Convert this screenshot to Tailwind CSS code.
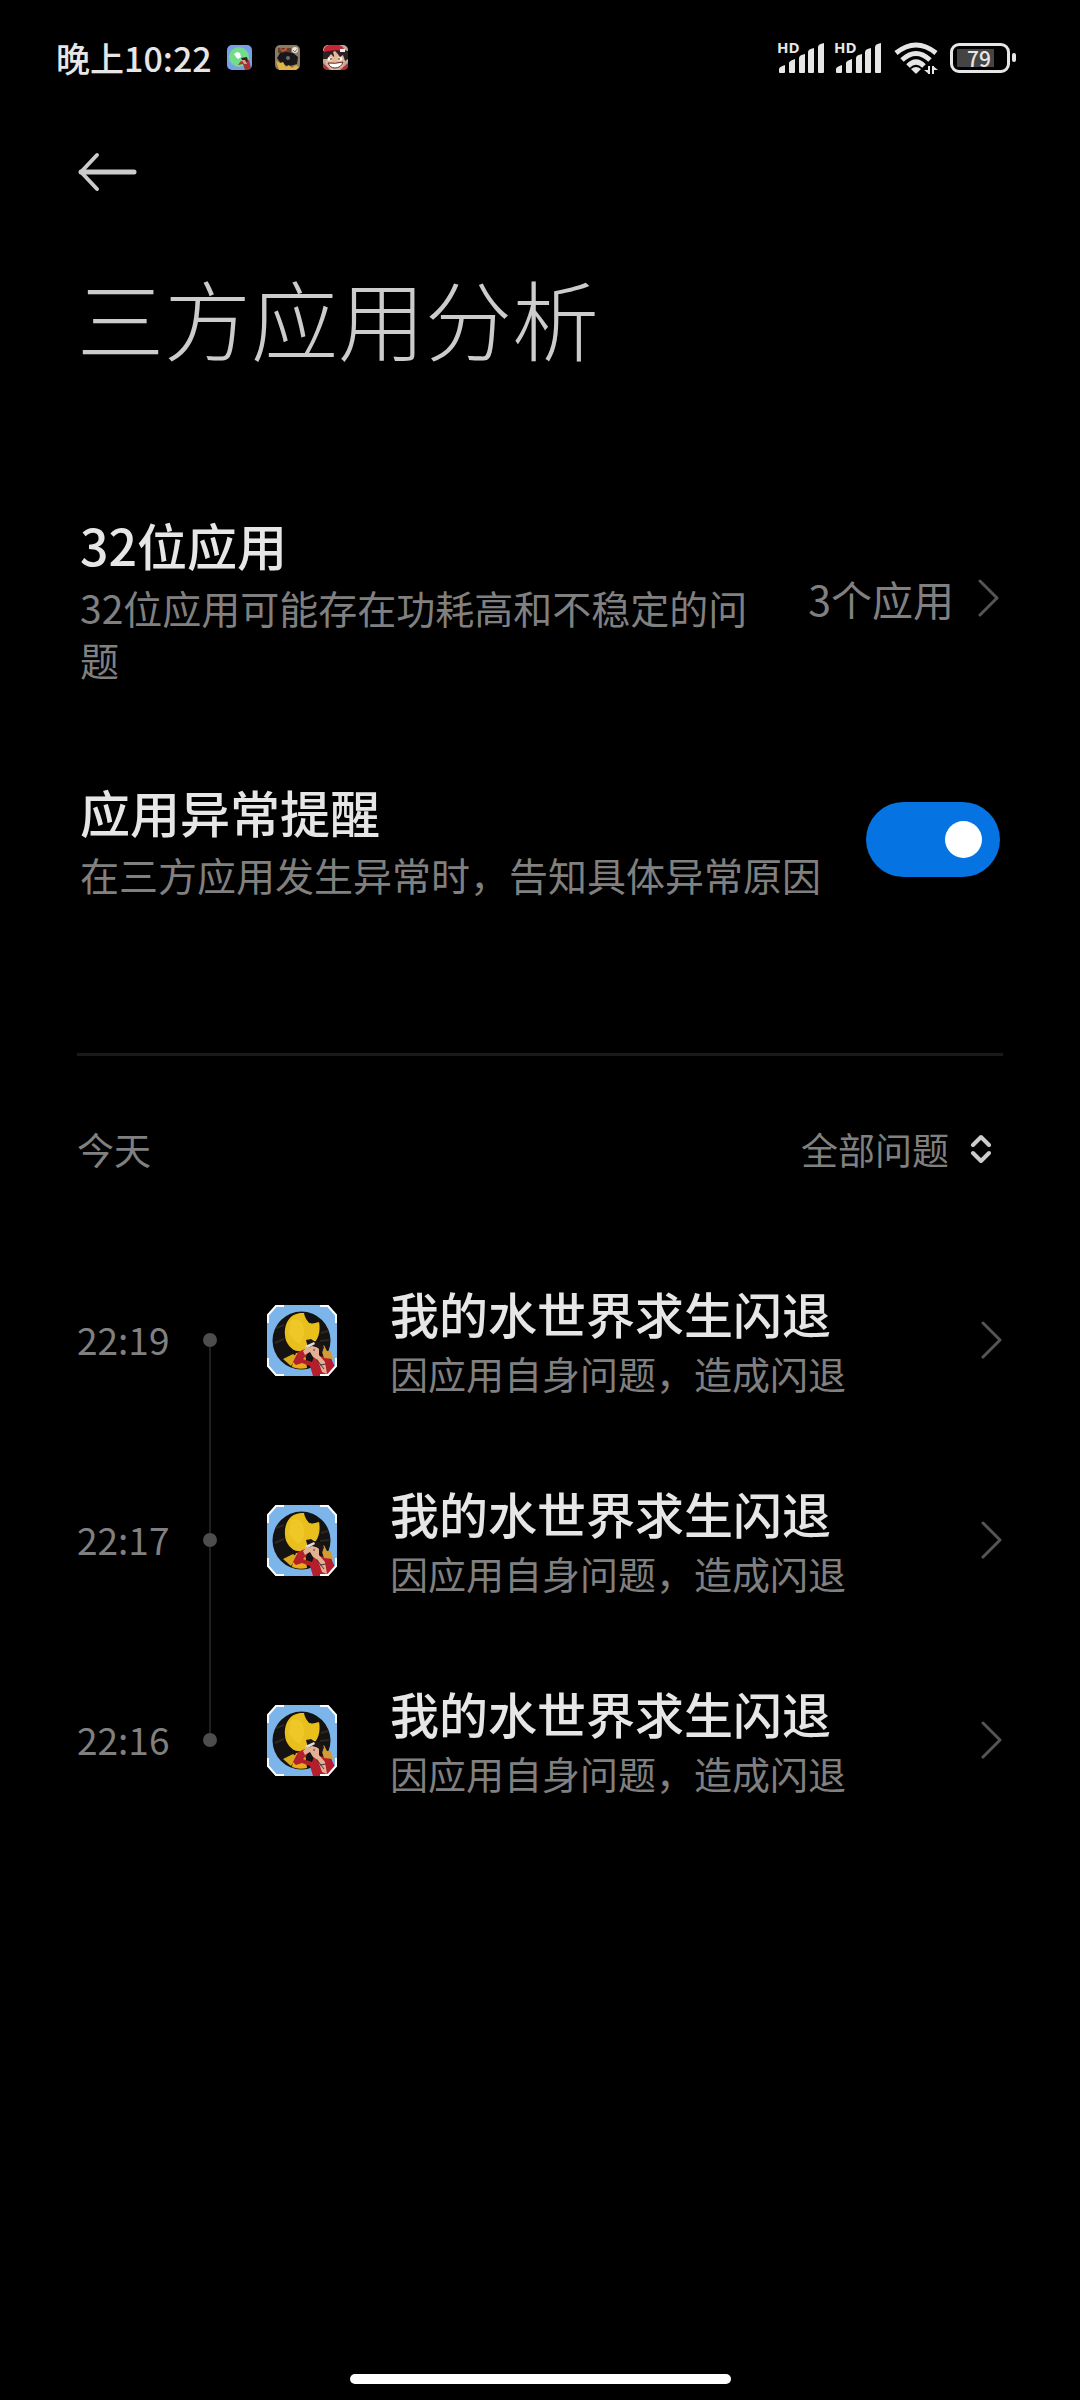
<!DOCTYPE html>
<html lang="zh-CN">
<head>
    <meta charset="UTF-8">
    <meta name="viewport" content="width=device-width, initial-scale=1.0">
    <title>三方应用分析</title>
    <script src="https://cdn.jsdelivr.net/npm/@tailwindcss/browser@4"></script>
</head>
<body class="bg-black text-[#e6e6e6] font-['Noto_Sans_CJK_SC',sans-serif] min-h-screen flex flex-col">
    <!-- Shared icons -->
    <svg class="hidden">
        <symbol id="chevron" viewBox="0 0 22 38">
            <path d="M2 2 L19 19 L2 36" fill="none" stroke="#555" stroke-width="3" stroke-linecap="round" stroke-linejoin="round"/>
        </symbol>
        <symbol id="signal" viewBox="0 0 46 30">
            <path d="M0 29 V26 Q0 24 6 22 V29 Q6 30 5 30 H1 Q0 30 0 29Z"/>
            <path d="M10 29 V20 Q10 18 16 16 V29 Q16 30 15 30 H11 Q10 30 10 29Z"/>
            <path d="M20 29 V15 Q20 12 26 11 V29 Q26 30 25 30 H21 Q20 30 20 29Z"/>
            <path d="M29 29 V9 Q29 6 35 5 V29 Q35 30 34 30 H30 Q29 30 29 29Z"/>
            <path d="M39 29 V4 Q39 1 45 0 V29 Q45 30 44 30 H40 Q39 30 39 29Z"/>
        </symbol>
        <symbol id="game" viewBox="0 0 70 71">
            <path d="M9 0 H61 L70 10 V61 L61 71 H9 L0 61 V10Z" fill="#7cb5ea"/>
            <circle cx="34.500" cy="35.500" r="29" fill="#151311"/>
            <path d="M9 23 L17 20 M8 38 L17 34 M54 28 L61 26 M53 36 L62 35" stroke="#2a2722" stroke-width="2"/>
            <path d="M18 30 C17 17 24 7 37 8 C38 14 42 20 48 18 L52 17 C54 26 51 36 45 40 L37 47 L31 46 C25 46 18 38 18 30Z" fill="#e8bf1c"/>
            <path d="M24 15 Q33 12 36 20 Q40 31 32 39 Q24 34 22 27Z" fill="#f2cc2c" opacity=".7"/>
            <path d="M41 12 Q42 7 47 10 Q51 11 50 16 Q45 20 41 17Z" fill="#111"/>
            <path d="M29 48 L38 47 L40 63 Q32 65 25 62 L26 55Z" fill="#e8ab18"/>
            <path d="M16 54 L26 49 L30 52 L24 61Z" fill="#d9a81c"/>
            <path d="M26 57 L31 47 L38 44 L40 50 L36 54 L45 57 L47 52 L52 51 L64 53 L68 62 L61 71 H46 L43 61 L35 58 L29 60Z" fill="#b51f2c"/>
            <path d="M54 44 L57 40 L60 46 L64 46 L66 54 L57 53Z" fill="#d39b35"/>
            <path d="M36 46 L41 41 L48 40 L52 44 L52 50 L58 57 L60 69 L55 67 L51 55 L46 52 L43 47 L38 50Z" fill="#e2b193"/>
            <path d="M39 35 L44 34 L47 36 L53 37 L57 42 L55 48 L52 43 L45 41 L41 43Z" fill="#201515"/>
            <path d="M38 41 L47 37 L48 39 L41 43Z" fill="#ddd"/>
            <path d="M46 45 H48 M50 55 L57 64 M53 60 L59 59" stroke="#4b3434" stroke-width="1"/>
            <path d="M1 18 V10 L9 1 H17 M53 1 H61 L69 10 V18 M69 53 V61 L61 70 H53 M17 70 H9 L1 61 V53" fill="none" stroke="#fff" stroke-width="2"/>
        </symbol>
    </svg>

    <!-- Status bar -->
    <header class="flex items-center justify-between h-[115px] pl-14 pr-16">
        <div class="flex items-center">
            <time class="text-[34px] leading-[50px] font-medium">晚上10:22</time>
            <div class="flex items-center gap-[23px] ml-[15px]">
                <svg class="w-[25px] h-[25px]" viewBox="0 0 25 25">
                    <rect width="25" height="25" rx="5" fill="#76a0e8"/>
                    <circle cx="12" cy="12" r="10" fill="#72dd8a"/>
                    <path d="M7 9 L10 7 L13 8 L14 12 L11 14 L9 12Z" fill="#fff"/>
                    <path d="M11 20 L14 16 L18 17 L22 15 L24 23 L21 25 H18 L16 19Z" fill="#a83238"/>
                    <path d="M14 13 L20 12 L21 16 L17 18Z" fill="#33221f"/>
                    <path d="M15 15 L18 15 L20 19 L17 19Z" fill="#dca37f"/>
                </svg>
                <svg class="w-[25px] h-[25px]" viewBox="0 0 25 25">
                    <rect width="25" height="25" rx="5" fill="#8b7b62"/>
                    <path d="M3 3 H16 V8 H3Z" fill="#5d4030"/>
                    <path d="M4 2 L8 5 L12 2 V5 L7 7Z" fill="#c75a37"/>
                    <path d="M2 13 L5 8 L11 7 L18 8 L23 12 L22 19 L15 21 L7 20Z" fill="#171719"/>
                    <path d="M1 16 L5 18 L8 17 L11 22 L14 20 L17 23 L21 20 L24 22 L21 25 H4Z" fill="#dfb344"/>
                    <circle cx="13" cy="13" r="2" fill="#667078"/>
                    <circle cx="20" cy="5" r="3" fill="#e9e5d8"/>
                    <path d="M18 5 L20 7 L22 4" fill="none" stroke="#777"/>
                </svg>
                <svg class="w-[25px] h-[25px]" viewBox="0 0 25 25">
                    <rect width="25" height="25" rx="5" fill="#b9a9a0"/>
                    <path d="M3 8 H21 L23 13 L20 21 L15 25 H9 L3 19Z" fill="#e9b997"/>
                    <path d="M0 6 Q12 1 25 6 V14 L22 16 L20 10 L17 12 L14 8 L11 12 L8 9 L4 14 L0 14Z" fill="#2b2024"/>
                    <path d="M10 7 L12 6 L14 8 L12 14Z" fill="#e9b997"/>
                    <path d="M1 4 Q3 0 7 0 H16 Q20 1 21 4 L20 6 Q12 4 1 7Z" fill="#c62735"/>
                    <path d="M5 14 H9 M15 14 H19" stroke="#fff" stroke-width="3"/>
                    <path d="M8 13 V15 M16 13 V15" stroke="#111" stroke-width="1"/>
                    <path d="M5 18 Q12 19 20 17 Q18 23 12 23 Q7 23 5 18Z" fill="#fff" stroke="#5a2a2a"/>
                    <path d="M0 18 L4 22 L7 25 H4 Q0 24 0 20Z M25 18 L17 25 H21 Q25 24 25 20Z" fill="#b52b36"/>
                    <path d="M17 4 H22 V7 H17Z" fill="#eee"/>
                </svg>
            </div>
        </div>
        <div class="flex items-center">
            <div class="relative w-[57px] h-[30px]">
                <span class="absolute -top-1 left-0 text-[15px] leading-4 font-bold font-['Open_Sans',sans-serif]">HD</span>
                <svg class="ml-[2px] w-[46px] h-[30px]" fill="#e6e6e6"><use href="#signal"/></svg>
            </div>
            <div class="relative w-[60px] h-[30px]">
                <span class="absolute -top-1 left-0 text-[15px] leading-4 font-bold font-['Open_Sans',sans-serif]">HD</span>
                <svg class="ml-[2px] w-[46px] h-[30px]" fill="#e6e6e6"><use href="#signal"/></svg>
            </div>
            <!-- Wi-Fi -->
            <svg class="w-11 h-8" viewBox="0 0 44 32" fill="none" stroke="#e6e6e6" stroke-width="5">
                <path d="M2 11 Q22 -5 42 11"/>
                <path d="M8 18 Q22 5 36 18"/>
                <path d="M14 24 Q22 16 30 24"/>
                <path d="M17 27 Q22 23 27 27 L23 31 Q22 32 21 31Z" fill="#e6e6e6" stroke="none"/>
                <path d="M35 24 V32 M39 32 V24" stroke-width="2"/>
                <path d="M30 28 H35 V32Z M39 24 L44 28 H39Z" fill="#e6e6e6" stroke="none"/>
            </svg>
            <!-- Battery -->
            <div class="flex items-center ml-3">
                <div class="flex items-center w-15 h-[30px] border-3 border-[#e6e6e6] rounded-[9px] p-1">
                    <div class="flex items-center justify-end w-[37px] h-[18px] bg-[#444] pr-[3px] text-[21px] font-medium leading-5">79</div>
                </div>
                <div class="w-1 h-[9px] ml-[2px] rounded-sm bg-[#e6e6e6]"></div>
            </div>
        </div>
    </header>

    <main class="px-[77px]">
        <button type="button" aria-label="返回" class="block mt-9">
            <svg class="w-15 h-[42px]" viewBox="0 0 60 42" fill="none" stroke="#ccc" stroke-linecap="round" stroke-linejoin="round">
                <path d="M4 21 H57" stroke-width="5"/>
                <path d="M20 4 L4 21 L20 38" stroke-width="4"/>
            </svg>
        </button>
        <h1 class="mt-[62px] text-[87px] leading-[124px] font-light text-[#ccc]">三方应用分析</h1>

        <!-- Settings -->
        <section class="mt-[132px] pl-[3px] pr-[3px]">
            <a href="#apps32" class="flex items-center justify-between">
                <div class="flex-1">
                    <h2 class="text-[50px] leading-[66px] font-medium">32位应用</h2>
                    <p class="mt-1 text-[39px] leading-[52px] text-[#808080]">32位应用可能存在功耗高和不稳定的问题</p>
                </div>
                <span class="ml-[54px] text-[41px] leading-[56px] text-[#808080]">3个应用</span>
                <svg class="ml-6 w-[22px] h-[38px]"><use href="#chevron"/></svg>
            </a>
            <div class="mt-[93px] flex items-center justify-between">
                <label for="alert">
                    <span class="block text-[50px] leading-[66px] font-medium">应用异常提醒</span>
                    <span class="block mt-1 text-[39px] leading-[52px] text-[#808080]">在三方应用发生异常时，告知具体异常原因</span>
                </label>
                <input id="alert" type="checkbox" checked class="appearance-none flex items-center justify-start checked:justify-end shrink-0 w-[134px] h-[75px] px-[18px] rounded-full bg-[#333] checked:bg-[#0573e1] before:content-[''] before:w-[37px] before:h-[37px] before:rounded-full before:bg-white">
            </div>
        </section>

        <hr class="mt-[153px] border-t-3 border-[#1a1a1a]">

        <!-- Day and filter -->
        <div class="mt-[65px] flex items-center justify-between text-[37px] leading-[56px] text-[#808080]">
            <h3>今天</h3>
            <label class="flex items-center gap-5 pr-3">
                <select aria-label="问题类型" class="appearance-none bg-black">
                    <option>全部问题</option>
                    <option>闪退</option>
                </select>
                <svg class="w-[22px] h-[30px]" viewBox="0 0 22 30" fill="none" stroke="#ccc" stroke-width="4" stroke-linecap="round" stroke-linejoin="round">
                    <path d="M4 11 L12 3 L20 11 M4 19 L12 27 L20 19"/>
                </svg>
            </label>
        </div>

        <!-- Crash timeline -->
        <ul class="mt-[63px]">
            <li>
                <a href="#2219" class="flex items-center h-[200px]">
                    <time class="w-[126px] text-[37px] text-[#808080]">22:19</time>
                    <div class="self-stretch w-[14px] flex flex-col items-center">
                        <div class="flex-1"></div>
                        <div class="w-[14px] h-[14px] rounded-full bg-[#4d4d4d]"></div>
                        <div class="flex-1 w-[2px] bg-[#1f1f1f]"></div>
                    </div>
                    <svg class="ml-[50px] w-[70px] h-[71px]"><use href="#game"/></svg>
                    <div class="ml-[53px] flex-1">
                        <h4 class="text-[49px] leading-[66px] font-medium">我的水世界求生闪退</h4>
                        <p class="text-[38px] leading-[54px] text-[#808080]">因应用自身问题，造成闪退</p>
                    </div>
                    <svg class="w-[22px] h-[38px]"><use href="#chevron"/></svg>
                </a>
            </li>
            <li>
                <a href="#2217" class="flex items-center h-[200px]">
                    <time class="w-[126px] text-[37px] text-[#808080]">22:17</time>
                    <div class="self-stretch w-[14px] flex flex-col items-center">
                        <div class="flex-1 w-[2px] bg-[#1f1f1f]"></div>
                        <div class="w-[14px] h-[14px] rounded-full bg-[#4d4d4d]"></div>
                        <div class="flex-1 w-[2px] bg-[#1f1f1f]"></div>
                    </div>
                    <svg class="ml-[50px] w-[70px] h-[71px]"><use href="#game"/></svg>
                    <div class="ml-[53px] flex-1">
                        <h4 class="text-[49px] leading-[66px] font-medium">我的水世界求生闪退</h4>
                        <p class="text-[38px] leading-[54px] text-[#808080]">因应用自身问题，造成闪退</p>
                    </div>
                    <svg class="w-[22px] h-[38px]"><use href="#chevron"/></svg>
                </a>
            </li>
            <li>
                <a href="#2216" class="flex items-center h-[200px]">
                    <time class="w-[126px] text-[37px] text-[#808080]">22:16</time>
                    <div class="self-stretch w-[14px] flex flex-col items-center">
                        <div class="flex-1 w-[2px] bg-[#1f1f1f]"></div>
                        <div class="w-[14px] h-[14px] rounded-full bg-[#4d4d4d]"></div>
                        <div class="flex-1"></div>
                    </div>
                    <svg class="ml-[50px] w-[70px] h-[71px]"><use href="#game"/></svg>
                    <div class="ml-[53px] flex-1">
                        <h4 class="text-[49px] leading-[66px] font-medium">我的水世界求生闪退</h4>
                        <p class="text-[38px] leading-[54px] text-[#808080]">因应用自身问题，造成闪退</p>
                    </div>
                    <svg class="w-[22px] h-[38px]"><use href="#chevron"/></svg>
                </a>
            </li>
        </ul>
    </main>

    <!-- Home indicator -->
    <div class="mt-auto mb-4 mx-auto w-[381px] h-[10px] rounded-full bg-white"></div>
</body>
</html>
